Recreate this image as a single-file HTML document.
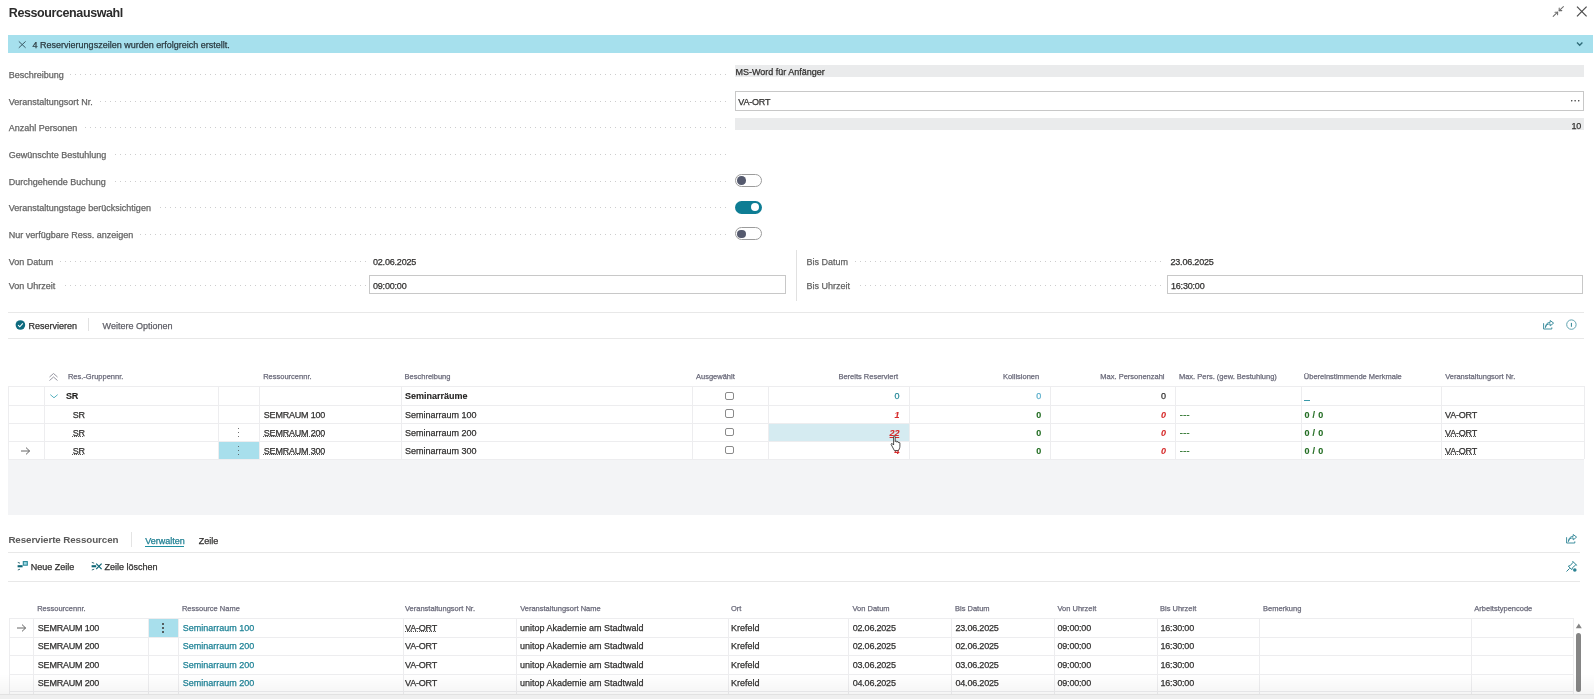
<!DOCTYPE html>
<html><head><meta charset="utf-8"><style>
html,body{margin:0;padding:0;background:#fff;width:1594px;height:699px;overflow:hidden;}
body{position:relative;font-family:"Liberation Sans",sans-serif;}
.t{position:absolute;white-space:nowrap;line-height:1;-webkit-text-stroke:0.25px currentColor;}
.r{position:absolute;}
.dots{background-image:repeating-linear-gradient(to right,#cdcdcd 0,#cdcdcd 1px,transparent 1px,transparent 5px);}
</style></head><body><div id="root" style="position:absolute;left:0;top:0;width:1594px;height:699px;will-change:transform">
<div class="t" style="left:8.80px;top:7.42px;font-size:12.5px;color:#2b2b2b;font-weight:700;letter-spacing:-0.4px;-webkit-text-stroke:0;">Ressourcenauswahl</div>
<svg class="r" style="left:1550px;top:4px" width="16" height="16" viewBox="1550 4 16 16">
<g stroke="#6e6e6e" stroke-width="1.05" fill="none" stroke-linecap="round">
<path d="M1553.2 16.4 L1557.6 12.2"/><path d="M1555 12.2 L1557.6 12.2 L1557.6 14.8"/>
<path d="M1563.4 6.6 L1559.2 10.6"/><path d="M1559.2 8 L1559.2 10.6 L1561.8 10.6"/>
</g></svg>
<svg class="r" style="left:1574px;top:4px" width="16" height="16" viewBox="1574 4 16 16">
<g stroke="#4a4a4a" stroke-width="1.2" fill="none">
<path d="M1577 6.6 L1586.6 16.4"/><path d="M1586.6 6.6 L1577 16.4"/>
</g></svg>
<div class="r" style="left:8.00px;top:35.00px;width:1584.80px;height:18.00px;background:#a6e0ed;"></div>
<svg class="r" style="left:16px;top:39px" width="12" height="12" viewBox="16 39 12 12">
<g stroke="#3b5a66" stroke-width="1" fill="none"><path d="M18.8 41.4 L25.6 47.8"/><path d="M25.6 41.4 L18.8 47.8"/></g></svg>
<div class="t" style="left:32.60px;top:41.08px;font-size:9px;color:#2b3a40;font-weight:400;">4 Reservierungszeilen wurden erfolgreich erstellt.</div>
<svg class="r" style="left:1574px;top:40px" width="12" height="8" viewBox="1574 40 12 8">
<path d="M1577 42.6 L1579.7 45.2 L1582.4 42.6" stroke="#2f6b78" stroke-width="1.4" fill="none"/></svg>
<div class="r dots" style="left:60.0px;top:74.4px;width:667.0px;height:1px"></div>
<div class="t" style="left:8.80px;top:71.38px;font-size:9px;color:#646464;font-weight:400;background:#fff;padding-right:6.5px;">Beschreibung</div>
<div class="r dots" style="left:60.0px;top:101.4px;width:667.0px;height:1px"></div>
<div class="t" style="left:8.80px;top:98.38px;font-size:9px;color:#646464;font-weight:400;background:#fff;padding-right:6.5px;">Veranstaltungsort Nr.</div>
<div class="r dots" style="left:60.0px;top:127.4px;width:667.0px;height:1px"></div>
<div class="t" style="left:8.80px;top:124.38px;font-size:9px;color:#646464;font-weight:400;background:#fff;padding-right:6.5px;">Anzahl Personen</div>
<div class="r dots" style="left:60.0px;top:154.4px;width:667.0px;height:1px"></div>
<div class="t" style="left:8.80px;top:151.38px;font-size:9px;color:#646464;font-weight:400;background:#fff;padding-right:6.5px;">Gewünschte Bestuhlung</div>
<div class="r dots" style="left:60.0px;top:180.9px;width:667.0px;height:1px"></div>
<div class="t" style="left:8.80px;top:177.88px;font-size:9px;color:#646464;font-weight:400;background:#fff;padding-right:6.5px;">Durchgehende Buchung</div>
<div class="r dots" style="left:60.0px;top:207.4px;width:667.0px;height:1px"></div>
<div class="t" style="left:8.80px;top:204.38px;font-size:9px;color:#646464;font-weight:400;background:#fff;padding-right:6.5px;">Veranstaltungstage berücksichtigen</div>
<div class="r dots" style="left:60.0px;top:234.1px;width:667.0px;height:1px"></div>
<div class="t" style="left:8.80px;top:231.08px;font-size:9px;color:#646464;font-weight:400;background:#fff;padding-right:6.5px;">Nur verfügbare Ress. anzeigen</div>
<div class="r" style="left:735.00px;top:65.00px;width:848.50px;height:12.30px;background:#eaebec;"></div>
<div class="t" style="left:735.40px;top:68.18px;font-size:9px;color:#323130;font-weight:400;">MS-Word für Anfänger</div>
<div class="r" style="left:735.00px;top:91.40px;width:848.50px;height:19.40px;background:#fff;box-sizing:border-box;border:1px solid #c8c8c8;"></div>
<div class="t" style="left:738.30px;top:97.68px;font-size:9px;color:#323130;font-weight:400;letter-spacing:-0.2px;">VA-ORT</div>
<div class="t" style="right:13.50px;top:95.53px;font-size:10px;color:#444;font-weight:400;letter-spacing:0.2px;">···</div>
<div class="r" style="left:735.00px;top:118.00px;width:848.50px;height:12.00px;background:#eaebec;"></div>
<div class="t" style="right:13.00px;top:121.78px;font-size:9px;color:#323130;font-weight:400;letter-spacing:-0.2px;">10</div>
<div class="r" style="left:735px;top:174.2px;width:27px;height:13px;border-radius:7px;box-sizing:border-box;border:1px solid #9c9c9c;background:#fff"></div><div class="r" style="left:737.4px;top:176.39999999999998px;width:8.6px;height:8.6px;border-radius:50%;background:#555a6e"></div>
<div class="r" style="left:735px;top:200.7px;width:27px;height:13px;border-radius:7px;background:#0e7d94"></div><div class="r" style="left:750.5px;top:202.89999999999998px;width:8.6px;height:8.6px;border-radius:50%;background:#fff"></div>
<div class="r" style="left:735px;top:227.4px;width:27px;height:13px;border-radius:7px;box-sizing:border-box;border:1px solid #9c9c9c;background:#fff"></div><div class="r" style="left:737.4px;top:229.6px;width:8.6px;height:8.6px;border-radius:50%;background:#555a6e"></div>
<div class="r dots" style="left:40.0px;top:260.9px;width:325.5px;height:1px"></div>
<div class="r dots" style="left:40.0px;top:285.4px;width:325.5px;height:1px"></div>
<div class="t" style="left:8.80px;top:257.88px;font-size:9px;color:#646464;font-weight:400;background:#fff;padding-right:6.5px;">Von Datum</div>
<div class="t" style="left:8.80px;top:282.38px;font-size:9px;color:#646464;font-weight:400;background:#fff;padding-right:6.5px;">Von Uhrzeit</div>
<div class="t" style="left:373.00px;top:257.88px;font-size:9px;color:#323130;font-weight:400;letter-spacing:-0.2px;">02.06.2025</div>
<div class="r" style="left:369.20px;top:275.30px;width:416.80px;height:18.40px;background:#fff;box-sizing:border-box;border:1px solid #c8c8c8;"></div>
<div class="t" style="left:373.00px;top:281.88px;font-size:9px;color:#323130;font-weight:400;letter-spacing:-0.2px;">09:00:00</div>
<div class="r" style="left:795.50px;top:250.00px;width:1.00px;height:51.00px;background:#e1e1e1;"></div>
<div class="r dots" style="left:840.0px;top:260.9px;width:321.0px;height:1px"></div>
<div class="r dots" style="left:840.0px;top:285.4px;width:321.0px;height:1px"></div>
<div class="t" style="left:806.60px;top:257.88px;font-size:9px;color:#646464;font-weight:400;background:#fff;padding-right:6.5px;">Bis Datum</div>
<div class="t" style="left:806.60px;top:282.38px;font-size:9px;color:#646464;font-weight:400;background:#fff;padding-right:6.5px;">Bis Uhrzeit</div>
<div class="t" style="left:1170.50px;top:257.88px;font-size:9px;color:#323130;font-weight:400;letter-spacing:-0.2px;">23.06.2025</div>
<div class="r" style="left:1167.40px;top:275.30px;width:415.60px;height:18.40px;background:#fff;box-sizing:border-box;border:1px solid #c8c8c8;"></div>
<div class="t" style="left:1171.00px;top:281.88px;font-size:9px;color:#323130;font-weight:400;letter-spacing:-0.2px;">16:30:00</div>
<div class="r" style="left:8.00px;top:312.40px;width:1575.60px;height:1.00px;background:#e8e8e8;"></div>
<div class="r" style="left:8.00px;top:337.60px;width:1575.60px;height:1.00px;background:#e8e8e8;"></div>
<svg class="r" style="left:14px;top:319px" width="13" height="13" viewBox="14 319 13 13">
<circle cx="20.4" cy="325" r="4.8" fill="#0f6b7f"/><path d="M18.1 325.1 L19.8 326.8 L22.8 323.4" stroke="#fff" stroke-width="1.1" fill="none"/></svg>
<div class="t" style="left:28.60px;top:322.18px;font-size:9px;color:#323130;font-weight:400;">Reservieren</div>
<div class="r" style="left:88.30px;top:317.50px;width:1.00px;height:13.50px;background:#e1e1e1;"></div>
<div class="t" style="left:102.60px;top:322.18px;font-size:9px;color:#5f5f67;font-weight:400;">Weitere Optionen</div>
<svg class="r" style="left:1542.5px;top:319.5px" width="12" height="11" viewBox="0 0 12 11">
<g stroke="#36899a" stroke-width="0.95" fill="none" stroke-linejoin="round">
<path d="M0.6 3.2 V9 H8.8 V7.4"/><path d="M2.4 7.6 C2.9 5 4.6 3.9 7.2 3.9 V5.9 L10.6 3.1 L7.2 0.5 V2.3 C4.4 2.3 2.6 4.3 2.4 7.6 Z"/>
</g></svg>
<svg class="r" style="left:1565px;top:318px" width="13" height="13" viewBox="1565 318 13 13">
<circle cx="1571.4" cy="324.6" r="4.7" stroke="#4f9aa8" stroke-width="0.9" fill="none"/>
<path d="M1571.4 322.9 V326.8" stroke="#2c8393" stroke-width="1"/></svg>
<svg class="r" style="left:47px;top:371px" width="12" height="12" viewBox="47 371 12 12">
<g stroke="#8a8a96" stroke-width="0.9" fill="none"><path d="M49.5 377 L53.5 373.5 L57.5 377"/><path d="M49.5 380.5 L53.5 377 L57.5 380.5"/></g></svg>
<div class="t" style="left:67.90px;top:373.25px;font-size:7.5px;color:#6a6a7a;font-weight:400;">Res.-Gruppennr.</div>
<div class="t" style="left:263.20px;top:373.25px;font-size:7.5px;color:#6a6a7a;font-weight:400;">Ressourcennr.</div>
<div class="t" style="left:404.60px;top:373.25px;font-size:7.5px;color:#6a6a7a;font-weight:400;">Beschreibung</div>
<div class="t" style="left:696.00px;top:373.25px;font-size:7.5px;color:#6a6a7a;font-weight:400;">Ausgewählt</div>
<div class="t" style="right:696.00px;top:373.25px;font-size:7.5px;color:#6a6a7a;font-weight:400;">Bereits Reserviert</div>
<div class="t" style="right:554.80px;top:373.25px;font-size:7.5px;color:#6a6a7a;font-weight:400;">Kollisionen</div>
<div class="t" style="right:429.50px;top:373.25px;font-size:7.5px;color:#6a6a7a;font-weight:400;">Max. Personenzahl</div>
<div class="t" style="left:1178.90px;top:373.25px;font-size:7.5px;color:#6a6a7a;font-weight:400;">Max. Pers. (gew. Bestuhlung)</div>
<div class="t" style="left:1303.80px;top:373.25px;font-size:7.5px;color:#6a6a7a;font-weight:400;">Übereinstimmende Merkmale</div>
<div class="t" style="left:1445.20px;top:373.25px;font-size:7.5px;color:#6a6a7a;font-weight:400;">Veranstaltungsort Nr.</div>
<div class="r" style="left:217.60px;top:441.20px;width:41.80px;height:18.00px;background:#a8dfec;"></div>
<div class="r" style="left:767.50px;top:423.00px;width:141.00px;height:18.20px;background:#d5ebf1;"></div>
<div class="r" style="left:8.30px;top:386.30px;width:1575.40px;height:1.00px;background:#ededef;"></div>
<div class="r" style="left:8.30px;top:404.60px;width:1575.40px;height:1.00px;background:#ededef;"></div>
<div class="r" style="left:8.30px;top:423.00px;width:1575.40px;height:1.00px;background:#ededef;"></div>
<div class="r" style="left:8.30px;top:441.20px;width:1575.40px;height:1.00px;background:#ededef;"></div>
<div class="r" style="left:8.30px;top:459.20px;width:1575.40px;height:1.00px;background:#ededef;"></div>
<div class="r" style="left:8.30px;top:386.30px;width:1.00px;height:72.90px;background:#ededef;"></div>
<div class="r" style="left:43.50px;top:386.30px;width:1.00px;height:72.90px;background:#ededef;"></div>
<div class="r" style="left:217.60px;top:386.30px;width:1.00px;height:72.90px;background:#ededef;"></div>
<div class="r" style="left:259.40px;top:386.30px;width:1.00px;height:72.90px;background:#ededef;"></div>
<div class="r" style="left:401.00px;top:386.30px;width:1.00px;height:72.90px;background:#ededef;"></div>
<div class="r" style="left:692.10px;top:386.30px;width:1.00px;height:72.90px;background:#ededef;"></div>
<div class="r" style="left:767.50px;top:386.30px;width:1.00px;height:72.90px;background:#ededef;"></div>
<div class="r" style="left:908.50px;top:386.30px;width:1.00px;height:72.90px;background:#ededef;"></div>
<div class="r" style="left:1050.30px;top:386.30px;width:1.00px;height:72.90px;background:#ededef;"></div>
<div class="r" style="left:1175.40px;top:386.30px;width:1.00px;height:72.90px;background:#ededef;"></div>
<div class="r" style="left:1300.50px;top:386.30px;width:1.00px;height:72.90px;background:#ededef;"></div>
<div class="r" style="left:1441.30px;top:386.30px;width:1.00px;height:72.90px;background:#ededef;"></div>
<div class="r" style="left:1583.70px;top:386.30px;width:1.00px;height:72.90px;background:#ededef;"></div>
<svg class="r" style="left:48px;top:392px" width="12" height="8" viewBox="48 392 12 8">
<path d="M50.3 394.6 L54 397.8 L57.7 394.6" stroke="#46a9b8" stroke-width="0.9" fill="none"/></svg>
<div class="t" style="left:66.00px;top:391.98px;font-size:9px;color:#201f1e;font-weight:700;letter-spacing:-0.2px;-webkit-text-stroke:0.1px currentColor;">SR</div>
<div class="t" style="left:405.00px;top:391.98px;font-size:9px;color:#201f1e;font-weight:700;-webkit-text-stroke:0.1px currentColor;">Seminarräume</div>
<div class="r" style="left:725.3px;top:391.6px;width:8.5px;height:8.5px;box-sizing:border-box;border:1px solid #8a8a8a;border-radius:2px;background:#fff"></div>
<div class="t" style="right:694.80px;top:391.98px;font-size:9px;color:#2a8a9a;font-weight:400;letter-spacing:-0.2px;">0</div>
<div class="t" style="right:553.00px;top:391.98px;font-size:9px;color:#5aaecb;font-weight:400;letter-spacing:-0.2px;">0</div>
<div class="t" style="right:428.30px;top:391.98px;font-size:9px;color:#323130;font-weight:400;letter-spacing:-0.2px;">0</div>
<div class="r" style="left:1304.00px;top:400.00px;width:5.50px;height:1.20px;background:#3a9aaa;"></div>
<div class="t" style="left:72.80px;top:410.88px;font-size:9px;color:#323130;font-weight:400;letter-spacing:-0.2px;">SR</div>
<div class="t" style="left:263.80px;top:410.88px;font-size:9px;color:#323130;font-weight:400;letter-spacing:-0.2px;">SEMRAUM 100</div>
<div class="t" style="left:405.00px;top:410.88px;font-size:9px;color:#323130;font-weight:400;">Seminarraum 100</div>
<div class="r" style="left:725.3px;top:409.3px;width:8.5px;height:8.5px;box-sizing:border-box;border:1px solid #8a8a8a;border-radius:2px;background:#fff"></div>
<div class="t" style="right:694.80px;top:410.88px;font-size:9px;color:#d62b2b;font-weight:700;font-style:italic;letter-spacing:-0.2px;-webkit-text-stroke:0.1px currentColor;">1</div>
<div class="t" style="right:553.00px;top:410.88px;font-size:9px;color:#236d23;font-weight:700;letter-spacing:-0.2px;-webkit-text-stroke:0.1px currentColor;">0</div>
<div class="t" style="right:428.30px;top:410.88px;font-size:9px;color:#d62b2b;font-weight:700;font-style:italic;letter-spacing:-0.2px;-webkit-text-stroke:0.1px currentColor;">0</div>
<div class="t" style="left:1179.80px;top:410.88px;font-size:9px;color:#236d23;font-weight:400;letter-spacing:0.4px;">---</div>
<div class="t" style="left:1304.50px;top:410.88px;font-size:9px;color:#236d23;font-weight:700;letter-spacing:0.3px;-webkit-text-stroke:0.1px currentColor;">0 / 0</div>
<div class="t" style="left:1445.00px;top:410.88px;font-size:9px;color:#323130;font-weight:400;letter-spacing:-0.2px;">VA-ORT</div>
<div class="t" style="left:72.80px;top:429.18px;font-size:9px;color:#323130;font-weight:400;text-decoration:underline dotted #555;text-underline-offset:0.2px;text-decoration-skip-ink:none;text-decoration-thickness:1px;letter-spacing:-0.2px;">SR</div>
<div class="t" style="left:263.80px;top:429.18px;font-size:9px;color:#323130;font-weight:400;text-decoration:underline dotted #555;text-underline-offset:0.2px;text-decoration-skip-ink:none;text-decoration-thickness:1px;letter-spacing:-0.2px;">SEMRAUM 200</div>
<div class="t" style="left:405.00px;top:429.18px;font-size:9px;color:#323130;font-weight:400;">Seminarraum 200</div>
<div class="r" style="left:725.3px;top:427.6px;width:8.5px;height:8.5px;box-sizing:border-box;border:1px solid #8a8a8a;border-radius:2px;background:#fff"></div>
<div class="t" style="right:694.80px;top:429.18px;font-size:9px;color:#d62b2b;font-weight:700;font-style:italic;text-decoration:underline;letter-spacing:-0.2px;-webkit-text-stroke:0.1px currentColor;">22</div>
<div class="t" style="right:553.00px;top:429.18px;font-size:9px;color:#236d23;font-weight:700;letter-spacing:-0.2px;-webkit-text-stroke:0.1px currentColor;">0</div>
<div class="t" style="right:428.30px;top:429.18px;font-size:9px;color:#d62b2b;font-weight:700;font-style:italic;letter-spacing:-0.2px;-webkit-text-stroke:0.1px currentColor;">0</div>
<div class="t" style="left:1179.80px;top:429.18px;font-size:9px;color:#236d23;font-weight:400;letter-spacing:0.4px;">---</div>
<div class="t" style="left:1304.50px;top:429.18px;font-size:9px;color:#236d23;font-weight:700;letter-spacing:0.3px;-webkit-text-stroke:0.1px currentColor;">0 / 0</div>
<div class="t" style="left:1445.00px;top:429.18px;font-size:9px;color:#323130;font-weight:400;text-decoration:underline dotted #555;text-underline-offset:0.2px;text-decoration-skip-ink:none;text-decoration-thickness:1px;letter-spacing:-0.2px;">VA-ORT</div>
<div class="t" style="left:72.80px;top:447.48px;font-size:9px;color:#323130;font-weight:400;text-decoration:underline dotted #555;text-underline-offset:0.2px;text-decoration-skip-ink:none;text-decoration-thickness:1px;letter-spacing:-0.2px;">SR</div>
<div class="t" style="left:263.80px;top:447.48px;font-size:9px;color:#323130;font-weight:400;text-decoration:underline dotted #555;text-underline-offset:0.2px;text-decoration-skip-ink:none;text-decoration-thickness:1px;letter-spacing:-0.2px;">SEMRAUM 300</div>
<div class="t" style="left:405.00px;top:447.48px;font-size:9px;color:#323130;font-weight:400;">Seminarraum 300</div>
<div class="r" style="left:725.3px;top:445.9px;width:8.5px;height:8.5px;box-sizing:border-box;border:1px solid #8a8a8a;border-radius:2px;background:#fff"></div>
<div class="t" style="right:694.80px;top:447.48px;font-size:9px;color:#d62b2b;font-weight:700;font-style:italic;letter-spacing:-0.2px;-webkit-text-stroke:0.1px currentColor;">4</div>
<div class="t" style="right:553.00px;top:447.48px;font-size:9px;color:#236d23;font-weight:700;letter-spacing:-0.2px;-webkit-text-stroke:0.1px currentColor;">0</div>
<div class="t" style="right:428.30px;top:447.48px;font-size:9px;color:#d62b2b;font-weight:700;font-style:italic;letter-spacing:-0.2px;-webkit-text-stroke:0.1px currentColor;">0</div>
<div class="t" style="left:1179.80px;top:447.48px;font-size:9px;color:#236d23;font-weight:400;letter-spacing:0.4px;">---</div>
<div class="t" style="left:1304.50px;top:447.48px;font-size:9px;color:#236d23;font-weight:700;letter-spacing:0.3px;-webkit-text-stroke:0.1px currentColor;">0 / 0</div>
<div class="t" style="left:1445.00px;top:447.48px;font-size:9px;color:#323130;font-weight:400;text-decoration:underline dotted #555;text-underline-offset:0.2px;text-decoration-skip-ink:none;text-decoration-thickness:1px;letter-spacing:-0.2px;">VA-ORT</div>
<div class="r" style="left:237.8px;top:427.9px;width:1.6px;height:1.6px;border-radius:50%;background:#444"></div><div class="r" style="left:237.8px;top:431.8px;width:1.6px;height:1.6px;border-radius:50%;background:#444"></div><div class="r" style="left:237.8px;top:435.8px;width:1.6px;height:1.6px;border-radius:50%;background:#444"></div>
<div class="r" style="left:237.8px;top:445.9px;width:1.6px;height:1.6px;border-radius:50%;background:#444"></div><div class="r" style="left:237.8px;top:449.9px;width:1.6px;height:1.6px;border-radius:50%;background:#444"></div><div class="r" style="left:237.8px;top:453.8px;width:1.6px;height:1.6px;border-radius:50%;background:#444"></div>
<svg class="r" style="left:20px;top:445.5px" width="12" height="10" viewBox="20 445.5 12 10">
<g stroke="#555" stroke-width="0.9" fill="none"><path d="M21 450.5 H29.6"/><path d="M26 447.1 L29.6 450.5 L26 453.9"/></g></svg>
<svg class="r" style="left:888px;top:433px" width="16" height="20" viewBox="888 433 16 20">
<path d="M893 448 L891.2 444.6 C890.8 443.8 891.8 443 892.5 443.8 L893.6 445 V436.8 C893.6 435.8 895.2 435.8 895.2 436.8 V441.6 C895.2 440.8 896.8 440.8 896.8 441.6 V442.2 C896.8 441.4 898.4 441.4 898.4 442.2 V442.8 C898.4 442.2 899.9 442.2 899.9 443 V446.2 C899.9 448.2 899 449.6 898.2 450.6 H894.4 Z" fill="#fff" stroke="#222" stroke-width="0.8"/></svg>
<div class="r" style="left:8.30px;top:459.70px;width:1575.40px;height:55.30px;background:#f3f4f6;"></div>
<div class="t" style="left:8.40px;top:535.30px;font-size:9.8px;color:#5a5a5a;font-weight:700;letter-spacing:-0.1px;-webkit-text-stroke:0;">Reservierte Ressourcen</div>
<div class="r" style="left:131.00px;top:532.00px;width:1.00px;height:14.50px;background:#e4e4e4;"></div>
<div class="t" style="left:145.20px;top:537.18px;font-size:9px;color:#1e7f92;font-weight:400;">Verwalten</div>
<div class="r" style="left:145.20px;top:545.60px;width:39.20px;height:1.80px;background:#1e8ea0;"></div>
<div class="t" style="left:198.70px;top:537.18px;font-size:9px;color:#323130;font-weight:400;">Zeile</div>
<svg class="r" style="left:1565.8px;top:534px" width="12" height="11" viewBox="0 0 12 11">
<g stroke="#36899a" stroke-width="0.95" fill="none" stroke-linejoin="round">
<path d="M0.6 3.2 V9 H8.8 V7.4"/><path d="M2.4 7.6 C2.9 5 4.6 3.9 7.2 3.9 V5.9 L10.6 3.1 L7.2 0.5 V2.3 C4.4 2.3 2.6 4.3 2.4 7.6 Z"/>
</g></svg>
<div class="r" style="left:8.00px;top:551.80px;width:1572.00px;height:1.00px;background:#e8e8e8;"></div>
<svg class="r" style="left:16px;top:559px" width="13" height="13" viewBox="16 559 13 13">
<path d="M17.8 562.4 L20 563.2" stroke="#3d6f7a" stroke-width="1" fill="none"/>
<rect x="17.6" y="565.2" width="5" height="2.1" fill="#0b6576"/>
<rect x="23.3" y="561.6" width="4" height="3.6" stroke="#2a8898" stroke-width="1.1" fill="#9fdbe6"/>
<path d="M17.8 570 L20 569.2" stroke="#3d6f7a" stroke-width="1" fill="none"/>
</svg>
<div class="t" style="left:30.70px;top:562.78px;font-size:9px;color:#323130;font-weight:400;">Neue Zeile</div>
<svg class="r" style="left:90px;top:559px" width="13" height="13" viewBox="90 559 13 13">
<path d="M91.8 562.4 L94.2 563.2" stroke="#3d6f7a" stroke-width="1" fill="none"/>
<rect x="91.6" y="565.2" width="4.6" height="2.1" fill="#0b6576"/>
<path d="M96.2 563.6 L101.6 569.2 M101.6 563.6 L96.2 569.2" stroke="#0b6576" stroke-width="1.2" fill="none"/>
<path d="M91.8 570 L94.2 569.2" stroke="#3d6f7a" stroke-width="1" fill="none"/>
</svg>
<div class="t" style="left:104.60px;top:562.78px;font-size:9px;color:#323130;font-weight:400;">Zeile löschen</div>
<svg class="r" style="left:1565px;top:560px" width="13" height="13" viewBox="1565 560 13 13">
<g fill="none" stroke="#2c8393" stroke-width="1" stroke-linejoin="round">
<path d="M1566.5 571.5 L1569.6 568.4"/>
<path d="M1568.3 566.2 L1571.8 569.7 L1572.4 567.8 L1575.6 565 L1576.6 565.2 L1572.8 561.4 L1573 562.4 L1570.2 565.6 Z"/>
</g><circle cx="1574.8" cy="570" r="1.8" fill="#2c8393"/></svg>
<div class="r" style="left:8.00px;top:581.00px;width:1572.00px;height:1.00px;background:#e8e8e8;"></div>
<div class="t" style="left:37.20px;top:604.65px;font-size:7.5px;color:#6a6a7a;font-weight:400;">Ressourcennr.</div>
<div class="t" style="left:181.90px;top:604.65px;font-size:7.5px;color:#6a6a7a;font-weight:400;">Ressource Name</div>
<div class="t" style="left:405.00px;top:604.65px;font-size:7.5px;color:#6a6a7a;font-weight:400;">Veranstaltungsort Nr.</div>
<div class="t" style="left:520.20px;top:604.65px;font-size:7.5px;color:#6a6a7a;font-weight:400;">Veranstaltungsort Name</div>
<div class="t" style="left:731.00px;top:604.65px;font-size:7.5px;color:#6a6a7a;font-weight:400;">Ort</div>
<div class="t" style="left:852.50px;top:604.65px;font-size:7.5px;color:#6a6a7a;font-weight:400;">Von Datum</div>
<div class="t" style="left:955.00px;top:604.65px;font-size:7.5px;color:#6a6a7a;font-weight:400;">Bis Datum</div>
<div class="t" style="left:1057.50px;top:604.65px;font-size:7.5px;color:#6a6a7a;font-weight:400;">Von Uhrzeit</div>
<div class="t" style="left:1160.00px;top:604.65px;font-size:7.5px;color:#6a6a7a;font-weight:400;">Bis Uhrzeit</div>
<div class="t" style="left:1263.00px;top:604.65px;font-size:7.5px;color:#6a6a7a;font-weight:400;">Bemerkung</div>
<div class="t" style="left:1474.30px;top:604.65px;font-size:7.5px;color:#6a6a7a;font-weight:400;">Arbeitstypencode</div>
<div class="r" style="left:148.10px;top:618.10px;width:30.00px;height:18.60px;background:#a8dfec;"></div>
<div class="r" style="left:8.50px;top:618.10px;width:1564.20px;height:1.00px;background:#ededef;"></div>
<div class="r" style="left:8.50px;top:636.70px;width:1564.20px;height:1.00px;background:#ededef;"></div>
<div class="r" style="left:8.50px;top:654.80px;width:1564.20px;height:1.00px;background:#ededef;"></div>
<div class="r" style="left:8.50px;top:673.60px;width:1564.20px;height:1.00px;background:#ededef;"></div>
<div class="r" style="left:8.50px;top:691.20px;width:1564.20px;height:1.00px;background:#ededef;"></div>
<div class="r" style="left:8.50px;top:693.80px;width:1564.20px;height:1.00px;background:#ededef;"></div>
<div class="r" style="left:8.50px;top:618.10px;width:1.00px;height:80.90px;background:#ededef;"></div>
<div class="r" style="left:33.40px;top:618.10px;width:1.00px;height:80.90px;background:#ededef;"></div>
<div class="r" style="left:148.10px;top:618.10px;width:1.00px;height:80.90px;background:#ededef;"></div>
<div class="r" style="left:178.10px;top:618.10px;width:1.00px;height:80.90px;background:#ededef;"></div>
<div class="r" style="left:402.60px;top:618.10px;width:1.00px;height:80.90px;background:#ededef;"></div>
<div class="r" style="left:516.40px;top:618.10px;width:1.00px;height:80.90px;background:#ededef;"></div>
<div class="r" style="left:728.00px;top:618.10px;width:1.00px;height:80.90px;background:#ededef;"></div>
<div class="r" style="left:848.30px;top:618.10px;width:1.00px;height:80.90px;background:#ededef;"></div>
<div class="r" style="left:951.30px;top:618.10px;width:1.00px;height:80.90px;background:#ededef;"></div>
<div class="r" style="left:1054.00px;top:618.10px;width:1.00px;height:80.90px;background:#ededef;"></div>
<div class="r" style="left:1156.60px;top:618.10px;width:1.00px;height:80.90px;background:#ededef;"></div>
<div class="r" style="left:1259.30px;top:618.10px;width:1.00px;height:80.90px;background:#ededef;"></div>
<div class="r" style="left:1470.60px;top:618.10px;width:1.00px;height:80.90px;background:#ededef;"></div>
<div class="r" style="left:1572.70px;top:618.10px;width:1.00px;height:80.90px;background:#ededef;"></div>
<div class="t" style="left:37.80px;top:623.88px;font-size:9px;color:#323130;font-weight:400;letter-spacing:-0.2px;">SEMRAUM 100</div>
<div class="t" style="left:182.70px;top:623.88px;font-size:9px;color:#1e8296;font-weight:400;">Seminarraum 100</div>
<div class="t" style="left:405.00px;top:623.88px;font-size:9px;color:#323130;font-weight:400;text-decoration:underline dotted #555;text-underline-offset:0.2px;text-decoration-skip-ink:none;text-decoration-thickness:1px;letter-spacing:-0.2px;">VA-ORT</div>
<div class="t" style="left:520.00px;top:623.88px;font-size:9px;color:#323130;font-weight:400;">unitop Akademie am Stadtwald</div>
<div class="t" style="left:731.00px;top:623.88px;font-size:9px;color:#323130;font-weight:400;">Krefeld</div>
<div class="t" style="left:852.70px;top:623.88px;font-size:9px;color:#323130;font-weight:400;letter-spacing:-0.2px;">02.06.2025</div>
<div class="t" style="left:955.50px;top:623.88px;font-size:9px;color:#323130;font-weight:400;letter-spacing:-0.2px;">23.06.2025</div>
<div class="t" style="left:1057.50px;top:623.88px;font-size:9px;color:#323130;font-weight:400;letter-spacing:-0.2px;">09:00:00</div>
<div class="t" style="left:1160.50px;top:623.88px;font-size:9px;color:#323130;font-weight:400;letter-spacing:-0.2px;">16:30:00</div>
<div class="t" style="left:37.80px;top:642.28px;font-size:9px;color:#323130;font-weight:400;letter-spacing:-0.2px;">SEMRAUM 200</div>
<div class="t" style="left:182.70px;top:642.28px;font-size:9px;color:#1e8296;font-weight:400;">Seminarraum 200</div>
<div class="t" style="left:405.00px;top:642.28px;font-size:9px;color:#323130;font-weight:400;letter-spacing:-0.2px;">VA-ORT</div>
<div class="t" style="left:520.00px;top:642.28px;font-size:9px;color:#323130;font-weight:400;">unitop Akademie am Stadtwald</div>
<div class="t" style="left:731.00px;top:642.28px;font-size:9px;color:#323130;font-weight:400;">Krefeld</div>
<div class="t" style="left:852.70px;top:642.28px;font-size:9px;color:#323130;font-weight:400;letter-spacing:-0.2px;">02.06.2025</div>
<div class="t" style="left:955.50px;top:642.28px;font-size:9px;color:#323130;font-weight:400;letter-spacing:-0.2px;">02.06.2025</div>
<div class="t" style="left:1057.50px;top:642.28px;font-size:9px;color:#323130;font-weight:400;letter-spacing:-0.2px;">09:00:00</div>
<div class="t" style="left:1160.50px;top:642.28px;font-size:9px;color:#323130;font-weight:400;letter-spacing:-0.2px;">16:30:00</div>
<div class="t" style="left:37.80px;top:660.58px;font-size:9px;color:#323130;font-weight:400;letter-spacing:-0.2px;">SEMRAUM 200</div>
<div class="t" style="left:182.70px;top:660.58px;font-size:9px;color:#1e8296;font-weight:400;">Seminarraum 200</div>
<div class="t" style="left:405.00px;top:660.58px;font-size:9px;color:#323130;font-weight:400;letter-spacing:-0.2px;">VA-ORT</div>
<div class="t" style="left:520.00px;top:660.58px;font-size:9px;color:#323130;font-weight:400;">unitop Akademie am Stadtwald</div>
<div class="t" style="left:731.00px;top:660.58px;font-size:9px;color:#323130;font-weight:400;">Krefeld</div>
<div class="t" style="left:852.70px;top:660.58px;font-size:9px;color:#323130;font-weight:400;letter-spacing:-0.2px;">03.06.2025</div>
<div class="t" style="left:955.50px;top:660.58px;font-size:9px;color:#323130;font-weight:400;letter-spacing:-0.2px;">03.06.2025</div>
<div class="t" style="left:1057.50px;top:660.58px;font-size:9px;color:#323130;font-weight:400;letter-spacing:-0.2px;">09:00:00</div>
<div class="t" style="left:1160.50px;top:660.58px;font-size:9px;color:#323130;font-weight:400;letter-spacing:-0.2px;">16:30:00</div>
<div class="t" style="left:37.80px;top:678.58px;font-size:9px;color:#323130;font-weight:400;letter-spacing:-0.2px;">SEMRAUM 200</div>
<div class="t" style="left:182.70px;top:678.58px;font-size:9px;color:#1e8296;font-weight:400;">Seminarraum 200</div>
<div class="t" style="left:405.00px;top:678.58px;font-size:9px;color:#323130;font-weight:400;letter-spacing:-0.2px;">VA-ORT</div>
<div class="t" style="left:520.00px;top:678.58px;font-size:9px;color:#323130;font-weight:400;">unitop Akademie am Stadtwald</div>
<div class="t" style="left:731.00px;top:678.58px;font-size:9px;color:#323130;font-weight:400;">Krefeld</div>
<div class="t" style="left:852.70px;top:678.58px;font-size:9px;color:#323130;font-weight:400;letter-spacing:-0.2px;">04.06.2025</div>
<div class="t" style="left:955.50px;top:678.58px;font-size:9px;color:#323130;font-weight:400;letter-spacing:-0.2px;">04.06.2025</div>
<div class="t" style="left:1057.50px;top:678.58px;font-size:9px;color:#323130;font-weight:400;letter-spacing:-0.2px;">09:00:00</div>
<div class="t" style="left:1160.50px;top:678.58px;font-size:9px;color:#323130;font-weight:400;letter-spacing:-0.2px;">16:30:00</div>
<svg class="r" style="left:15.5px;top:622.5px" width="12" height="10" viewBox="15.5 622.5 12 10">
<g stroke="#555" stroke-width="0.9" fill="none"><path d="M16.5 627.5 H25.1"/><path d="M21.5 624.1 L25.1 627.5 L21.5 630.9"/></g></svg>
<div class="r" style="left:162.4px;top:623.1px;width:1.6px;height:1.6px;border-radius:50%;background:#444"></div><div class="r" style="left:162.4px;top:627.1px;width:1.6px;height:1.6px;border-radius:50%;background:#444"></div><div class="r" style="left:162.4px;top:631.1px;width:1.6px;height:1.6px;border-radius:50%;background:#444"></div>
<svg class="r" style="left:1574px;top:621px" width="10" height="9" viewBox="1574 621 10 9">
<path d="M1575.8 628.2 L1578.8 623.6 L1581.8 628.2 Z" fill="#858585"/></svg>
<div class="r" style="left:1575.80px;top:633.30px;width:5.20px;height:58.70px;background:#858585;border-radius:3px;"></div>
<div class="r" style="left:0.00px;top:674.00px;width:1594.00px;height:20.00px;background:linear-gradient(rgba(0,0,0,0),rgba(0,0,0,0.04));"></div>
<div class="r" style="left:0.00px;top:694.00px;width:1594.00px;height:1.00px;background:#e2e2e2;"></div>
<div class="r" style="left:0.00px;top:695.00px;width:1594.00px;height:4.00px;background:#efefef;"></div>
</div></body></html>
